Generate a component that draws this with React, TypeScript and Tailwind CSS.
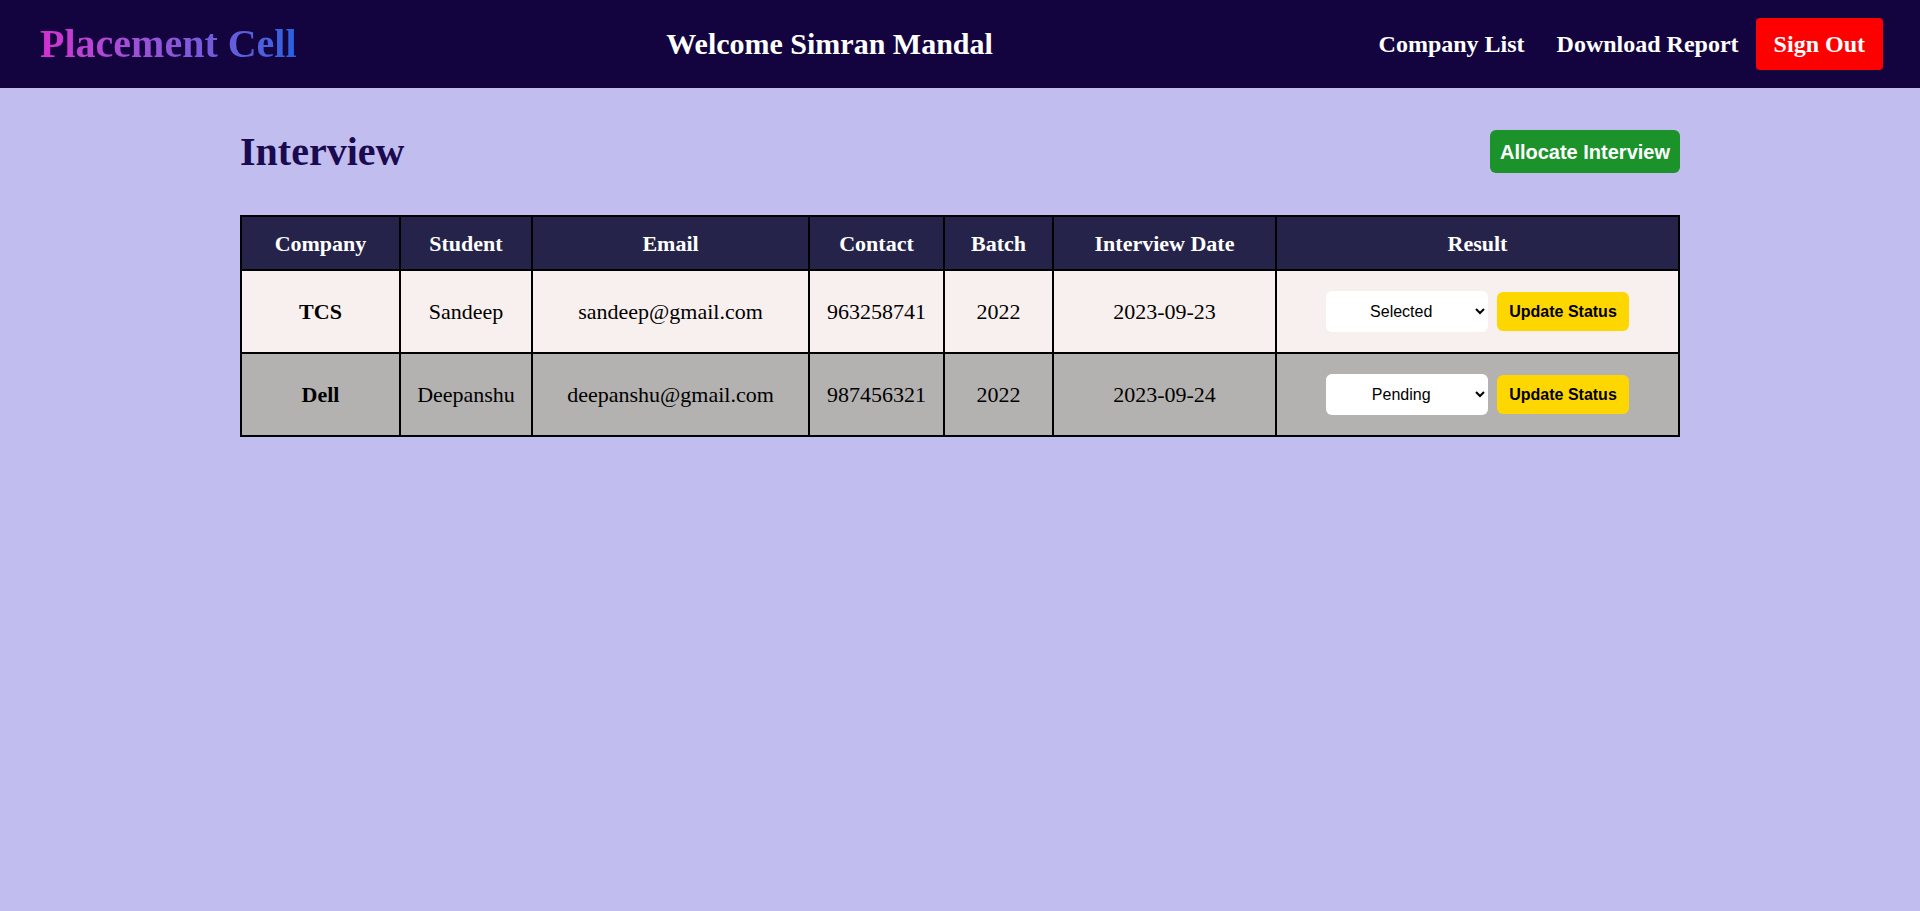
import { useState } from "react";

type Interview = {
  company: string;
  student: string;
  email: string;
  contact: string;
  batch: string;
  date: string;
  result: string;
};

const interviews: Interview[] = [
  {
    company: "TCS",
    student: "Sandeep",
    email: "sandeep@gmail.com",
    contact: "963258741",
    batch: "2022",
    date: "2023-09-23",
    result: "Selected",
  },
  {
    company: "Dell",
    student: "Deepanshu",
    email: "deepanshu@gmail.com",
    contact: "987456321",
    batch: "2022",
    date: "2023-09-24",
    result: "Pending",
  },
];

const serif = "font-['Liberation_Serif','Times_New_Roman',serif]";
const sans = "font-['Liberation_Sans',Arial,sans-serif]";

const Navbar = () => {
  return (
    <nav
      className={`flex h-[88px] items-center justify-between bg-[#13043f] pl-10 pr-[37px] ${serif}`}
    >
      <h1 className="bg-gradient-to-r from-[#d22fd0] to-[#2461e0] bg-clip-text text-[40px] font-bold leading-none text-transparent">
        Placement Cell
      </h1>
      <h2 className="mr-[16px] text-[30px] font-bold leading-none text-white">
        Welcome Simran Mandal
      </h2>
      <div className="flex items-center text-2xl font-bold text-white">
        <a href="#">Company List</a>
        <a href="#" className="ml-8">
          Download Report
        </a>
        <button className="ml-[17px] h-[52px] rounded bg-[#ff0000] px-[18px] text-white">
          Sign Out
        </button>
      </div>
    </nav>
  );
};

const ResultRow = ({ row, index }: { row: Interview; index: number }) => {
  const [status, setStatus] = useState<string>(row.result);

  return (
    <tr
      className={`${index % 2 === 0 ? "h-[83px] bg-[#f8f0ee]" : "h-[83px] bg-[#b3b2b0]"} text-[22px] text-black`}
    >
      <td className="border-2 border-black text-center font-bold">
        {row.company}
      </td>
      <td className="border-2 border-black text-center">{row.student}</td>
      <td className="border-2 border-black text-center">{row.email}</td>
      <td className="border-2 border-black text-center">{row.contact}</td>
      <td className="border-2 border-black text-center">{row.batch}</td>
      <td className="border-2 border-black text-center">{row.date}</td>
      <td className="border-2 border-black">
        <div className={`flex items-center justify-center gap-[9px] ${sans}`}>
          <select
            value={status}
            onChange={({ target }) => setStatus(target.value)}
            className="h-[41px] w-[162px] rounded-md bg-white px-2 text-center text-base"
          >
            <option>Selected</option>
            <option>Pending</option>
            <option>Rejected</option>
            <option>On Hold</option>
          </select>
          <button className="h-[39px] rounded-md bg-[#ffd700] px-3 text-base font-bold">
            Update Status
          </button>
        </div>
      </td>
    </tr>
  );
};

const App = () => {
  return (
    <div className={`min-h-[911px] bg-[#c1bdee] ${serif}`}>
      <Navbar />
      <main className="mx-auto w-3/4 pt-[42px]">
        <div className="flex items-center justify-between">
          <h1 className="text-[40px] font-bold leading-none text-[#1a0a4f]">
            Interview
          </h1>
          <button
            className={`h-[43px] rounded-md bg-[#1b922a] px-[10px] text-xl font-bold text-white ${sans}`}
          >
            Allocate Interview
          </button>
        </div>
        <table className="mt-[42px] w-full table-fixed border-collapse border-2 border-black">
          <thead>
            <tr className="h-[54px] bg-[#25234a] text-[22px] text-white">
              <th className="w-[159px] border-2 border-black">Company</th>
              <th className="w-[132px] border-2 border-black">Student</th>
              <th className="w-[277px] border-2 border-black">Email</th>
              <th className="w-[135px] border-2 border-black">Contact</th>
              <th className="w-[109px] border-2 border-black">Batch</th>
              <th className="w-[223px] border-2 border-black">
                Interview Date
              </th>
              <th className="border-2 border-black">Result</th>
            </tr>
          </thead>
          <tbody>
            {interviews.map((row, i) => (
              <ResultRow key={row.email} row={row} index={i} />
            ))}
          </tbody>
        </table>
      </main>
    </div>
  );
};

export default App;
